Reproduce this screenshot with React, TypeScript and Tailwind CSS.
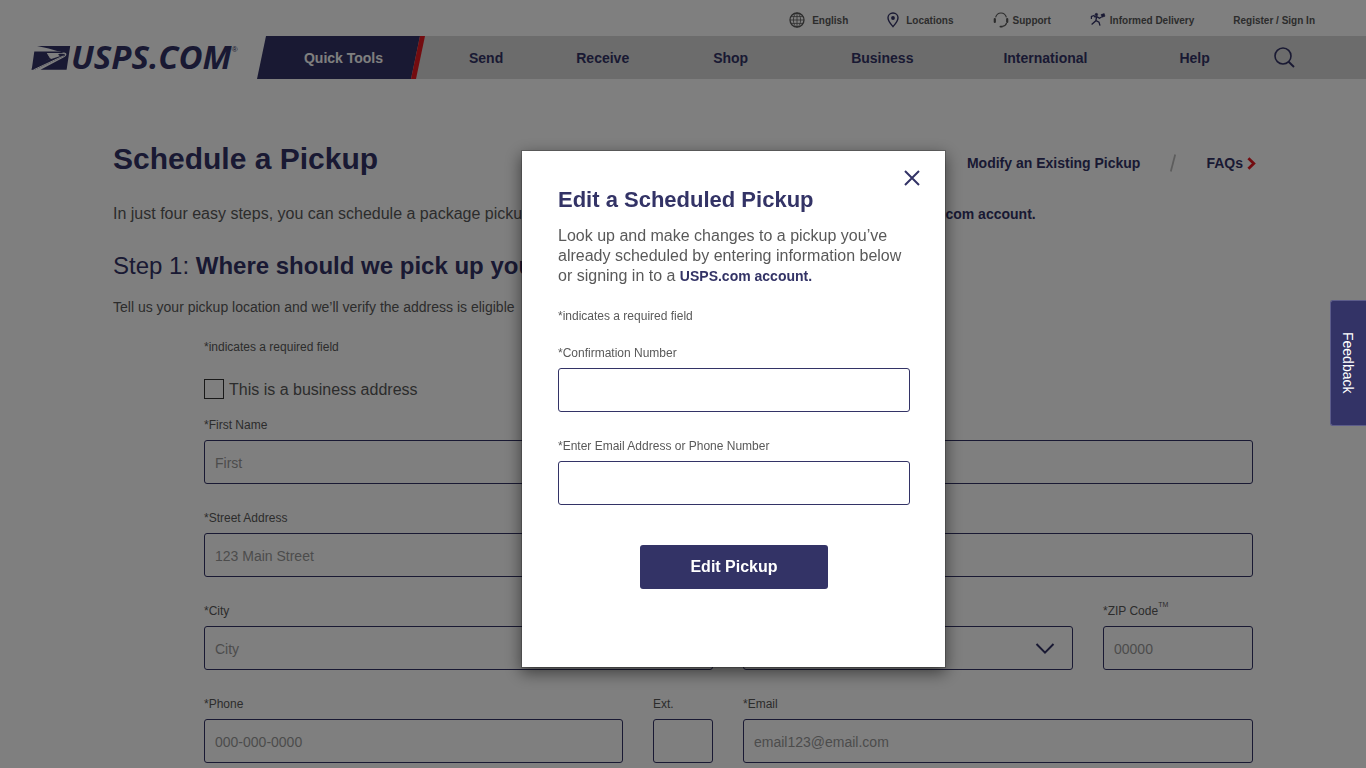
import type { ReactNode } from "react";

type FieldProps = {
  id: string;
  label: ReactNode;
  placeholder?: string;
};

type NavItem = { label: string; className: string };

const navItems: NavItem[] = [
  { label: "Send", className: "pl-11 pr-9" },
  { label: "Receive", className: "px-[37px]" },
  { label: "Shop", className: "px-[47px]" },
  { label: "Business", className: "pl-14 pr-[54px]" },
  { label: "International", className: "px-9" },
  { label: "Help", className: "px-14" },
];

function EagleMark() {
  return (
    <svg width="40" height="26" viewBox="0 0 40 26" fill="#333366" aria-hidden="true">
      <path d="M6 1H39.2L35.6 24.8H9.5L33 12.2C34.6 11.3 35.6 10.2 35.4 9.1C35.2 7.6 33.5 7.2 30.5 6.9L27 6.2C22 4.4 14 2.8 6 1Z" />
      <path d="M3.3 6.6H26.8C29.5 6.9 32.2 7.3 33.6 8.2C32 8 30 7.9 28.3 8.1H15.8L19.2 13.8L0.7 24.8Z" />
      <path d="M0.6 24.8L1 22.8L20.4 13L17 8.9H27.8C30.4 8.6 33 8.9 34 9.5C34.2 10.4 33.4 11 32.2 11.5L3.8 24.8Z" />
      <path d="M16.4 8.6H27.6C27 9.8 27.6 10.8 29.4 11.1L20.2 14Z" fill="#ffffff" />
      <path d="M2.6 24.8L32.5 10.9" stroke="#ffffff" strokeWidth="1" />
    </svg>
  );
}

function GlobeIcon() {
  return (
    <svg width="16" height="16" viewBox="0 0 16 16" fill="none" stroke="#595959" aria-hidden="true">
      <circle cx="8" cy="8" r="7" strokeWidth="1.3" />
      <ellipse cx="8" cy="8" rx="3.6" ry="7" strokeWidth="0.8" />
      <path d="M8 1V15M1 8H15M2.2 4.6H13.8M2.2 11.4H13.8" strokeWidth="0.8" />
    </svg>
  );
}

function PinIcon() {
  return (
    <svg width="12" height="16" viewBox="0 0 12 16" aria-hidden="true">
      <path
        d="M6 1C3.1 1 1 3.1 1 5.8C1 9 3.6 12 6 14.6C8.4 12 11 9 11 5.8C11 3.1 8.9 1 6 1Z"
        fill="none"
        stroke="#333366"
        strokeWidth="1.4"
      />
      <circle cx="6" cy="6" r="1.9" fill="#333366" />
    </svg>
  );
}

function HeadsetIcon() {
  return (
    <svg width="16" height="16" viewBox="0 0 16 16" fill="none" stroke="#595959" aria-hidden="true">
      <path d="M2.6 5.4C3.4 2.6 5.2 1 8 1S12.6 2.6 13.4 5.4" strokeWidth="1.1" />
      <path d="M13.6 11C13 13 11.8 14 9.4 14.4" strokeWidth="1.1" />
      <path d="M1.8 7V10M14.2 7V10" strokeWidth="2.2" strokeLinecap="round" />
      <path d="M7.4 14.6H9" strokeWidth="1.8" strokeLinecap="round" />
    </svg>
  );
}

function InformedDeliveryIcon() {
  return (
    <svg width="16" height="15" viewBox="0 0 16 15" fill="none" stroke="#333366" aria-hidden="true">
      <circle cx="6.4" cy="2.6" r="1.3" fill="#333366" strokeWidth="0.5" />
      <path d="M1.4 7V4.4L4.6 3.4" strokeWidth="1.2" />
      <path d="M4 4.6L7.4 5L9.4 6.2L11.6 5" strokeWidth="1.3" />
      <path d="M6.6 5L5.8 8.8L1.6 12.6M6 8.6L9 10.2L10 13.6" strokeWidth="1.3" />
      <path d="M11 2.6L14.2 1.6L15 4.2L12 5.2Z" fill="#333366" strokeWidth="0.6" />
    </svg>
  );
}

function Field({ id, label, placeholder }: FieldProps) {
  return (
    <div className="flex min-w-0 flex-col gap-[7px]">
      <label htmlFor={id} className="text-xs leading-4 whitespace-nowrap text-[#595959]">
        {label}
      </label>
      <input
        id={id}
        type="text"
        placeholder={placeholder}
        className="h-11 w-full rounded-[3px] border border-[#333366] bg-white px-2.5 pt-0.5 text-sm text-[#595959] outline-none placeholder:text-[#999999]"
      />
    </div>
  );
}

function Header() {
  return (
    <header className="flex">
      <a href="#" className="flex h-[79px] w-[257px] shrink-0 items-end pb-2 pl-[31px] text-[#333366]">
        <EagleMark />
        <span className="-mb-1 font-['Open_Sans',sans-serif] text-[33px] leading-9 font-bold italic">
          USPS.COM
        </span>
        <span className="self-end pb-4 text-[8px] leading-[10px]">®</span>
      </a>

      <div className="flex min-w-0 flex-1 flex-col">
        {/* Utility links */}
        <div className="flex h-9 items-end justify-end gap-[39px] pr-[51px] pb-1.5 text-[10px] leading-[18px] font-bold text-[#595959]">
          <a href="#" className="flex items-start gap-[7px]"><GlobeIcon />English</a>
          <a href="#" className="flex items-start gap-[7px]"><PinIcon />Locations</a>
          <a href="#" className="flex items-start gap-1"><HeadsetIcon />Support</a>
          <a href="#" className="flex items-start gap-1"><InformedDeliveryIcon />Informed Delivery</a>
          <a href="#">Register / Sign In</a>
        </div>

        {/* Main navigation */}
        <nav className="flex h-[43px] items-center bg-[linear-gradient(to_right,transparent_20px,#d8d8d8_20px)] text-sm font-bold text-[#333366]">
          <a href="#" className="flex h-full shrink-0 text-white">
            <span className="flex w-[163px] items-center justify-center bg-[#333366] pl-2.5 [clip-path:polygon(9px_0,100%_0,calc(100%_-_9px)_100%,0_100%)]">
              Quick Tools
            </span>
            <span className="-ml-[9px] w-3.5 bg-[#e71921] [clip-path:polygon(9px_0,100%_0,5px_100%,0_100%)]" />
          </a>
          {navItems.map((item) => (
            <a key={item.label} href="#" className={item.className}>
              {item.label}
            </a>
          ))}
          <button type="button" aria-label="Search" className="ml-2">
            <svg width="21" height="21" viewBox="0 0 21 21" fill="none" stroke="#333366" strokeWidth="1.6">
              <circle cx="9" cy="9" r="8" />
              <path d="M14.6 14.8L20 20" strokeWidth="1.9" />
            </svg>
          </button>
        </nav>
      </div>
    </header>
  );
}

function PickupForm() {
  return (
    <form className="mt-[22px] pl-[91px]">
      <p className="text-xs leading-4">*indicates a required field</p>
      <label className="mt-6 flex items-start gap-[5px] text-base leading-[22px]">
        <input type="checkbox" className="size-5 appearance-none border border-[#333333] bg-white" />
        This is a business address
      </label>

      <div className="mt-4 flex flex-col gap-[26px]">
        <div className="grid grid-cols-[419fr_60fr_510fr] gap-[30px]">
          <Field id="first-name" label="*First Name" placeholder="First" />
          <Field id="middle-initial" label="M.I." />
          <Field id="last-name" label="*Last Name" placeholder="Last" />
        </div>
        <div className="grid grid-cols-[509fr_510fr] gap-[30px]">
          <Field id="street" label="*Street Address" placeholder="123 Main Street" />
          <Field id="apt" label="Apt/Suite/Other" />
        </div>
        <div className="grid grid-cols-[509fr_330fr_150fr] gap-[30px]">
          <Field id="city" label="*City" placeholder="City" />
          <div className="flex min-w-0 flex-col gap-[7px]">
            <label htmlFor="state" className="text-xs leading-4">*State</label>
            <div className="relative">
              <select
                id="state"
                defaultValue="Select"
                className="h-11 w-full appearance-none rounded-[3px] border border-[#333366] bg-white px-2.5 text-sm text-[#999999]"
              >
                <option>Select</option>
              </select>
              <svg
                className="pointer-events-none absolute top-4 right-[18px]"
                width="20"
                height="13"
                viewBox="0 0 20 13"
                fill="none"
                stroke="#333366"
                strokeWidth="2"
              >
                <path d="M1.5 2L10 10.6L18.5 2" />
              </svg>
            </div>
          </div>
          <Field
            id="zip"
            label={<>*ZIP Code<sup className="-top-2 text-[7px]">TM</sup></>}
            placeholder="00000"
          />
        </div>
        <div className="grid grid-cols-[419fr_60fr_510fr] gap-[30px]">
          <Field id="phone" label="*Phone" placeholder="000-000-0000" />
          <Field id="ext" label="Ext." />
          <Field id="email" label="*Email" placeholder="email123@email.com" />
        </div>
      </div>
    </form>
  );
}

function EditPickupDialog() {
  return (
    <div className="fixed inset-0 flex items-start justify-center bg-black/50 pt-[150px] pl-[101px]">
      <div
        role="dialog"
        aria-modal="true"
        aria-labelledby="dialog-title"
        className="relative w-full max-w-[425px] border border-black/20 bg-white bg-clip-padding pt-[35px] pr-[35px] pb-[78px] pl-9 shadow-[0_5px_15px_rgba(0,0,0,0.5)]"
      >
        <button type="button" aria-label="Close" className="absolute top-[19px] right-[25px]">
          <svg width="16" height="16" viewBox="0 0 16 16" fill="none" stroke="#333366" strokeWidth="2">
            <path d="M1 1L15 15M15 1L1 15" />
          </svg>
        </button>

        <h2 id="dialog-title" className="text-[22px] leading-7 font-bold text-[#333366]">
          Edit a Scheduled Pickup
        </h2>
        <p className="mt-3 text-base leading-5">
          Look up and make changes to a pickup you’ve already scheduled by entering information below or
          signing in to a{" "}
          <a href="#" className="text-sm leading-5 font-bold text-[#333366]">USPS.com account.</a>
        </p>

        <form>
          <p className="mt-[22px] mb-[21px] text-xs leading-4">*indicates a required field</p>
          <div className="flex flex-col gap-[26px]">
            <Field id="confirmation" label="*Confirmation Number" />
            <Field id="contact" label="*Enter Email Address or Phone Number" />
          </div>
          <button
            type="button"
            className="mx-auto mt-10 block h-11 w-[188px] rounded-[3px] bg-[#333366] text-base font-bold text-white"
          >
            Edit Pickup
          </button>
        </form>
      </div>
    </div>
  );
}

export default function App() {
  return (
    <div className="h-screen overflow-hidden bg-white font-['Liberation_Sans',Arial,sans-serif] text-[#595959]">
      <Header />

      <main className="mx-auto max-w-[1140px] pt-[62px]">
        <div className="flex items-start justify-between">
          <h1 className="text-3xl leading-9 font-bold text-[#333366]">Schedule a Pickup</h1>
          <div className="-mr-[3px] flex items-center pt-3 text-sm leading-5 font-bold text-[#333366]">
            <a href="#">Modify an Existing Pickup</a>
            <svg className="mx-[30px]" width="6" height="18" viewBox="0 0 6 18" stroke="#bbbbbb" strokeWidth="1.8">
              <path d="M5.2 0.5L0.8 17.5" />
            </svg>
            <a href="#" className="flex items-center gap-1">
              FAQs
              <svg width="9" height="13" viewBox="0 0 9 13" fill="none" stroke="#e71921" strokeWidth="2.8">
                <path d="M1.4 1.2L6.8 6.5L1.4 11.8" />
              </svg>
            </a>
          </div>
        </div>

        <p className="mt-[27px] text-base leading-5">
          In just four easy steps, you can schedule a package pickup from your home or office. You’ll also need to
          have a{" "}
          <a href="#" className="text-sm leading-5 font-bold text-[#333366]">USPS.com account.</a>
        </p>
        <h2 className="mt-[27px] text-2xl leading-[30px] text-[#333366]">
          Step 1: <b>Where should we pick up your package?</b>
        </h2>
        <p className="mt-4 text-sm leading-5">
          Tell us your pickup location and we’ll verify the address is eligible
        </p>

        <PickupForm />
      </main>

      <EditPickupDialog />

      <button
        type="button"
        className="fixed top-[300px] right-0 flex h-[126px] w-9 items-center justify-center rounded-l-[3px] border border-r-0 border-[#5c5c8a] bg-[#333366] pr-0.5 text-sm text-white [writing-mode:vertical-rl]"
      >
        Feedback
      </button>
    </div>
  );
}
